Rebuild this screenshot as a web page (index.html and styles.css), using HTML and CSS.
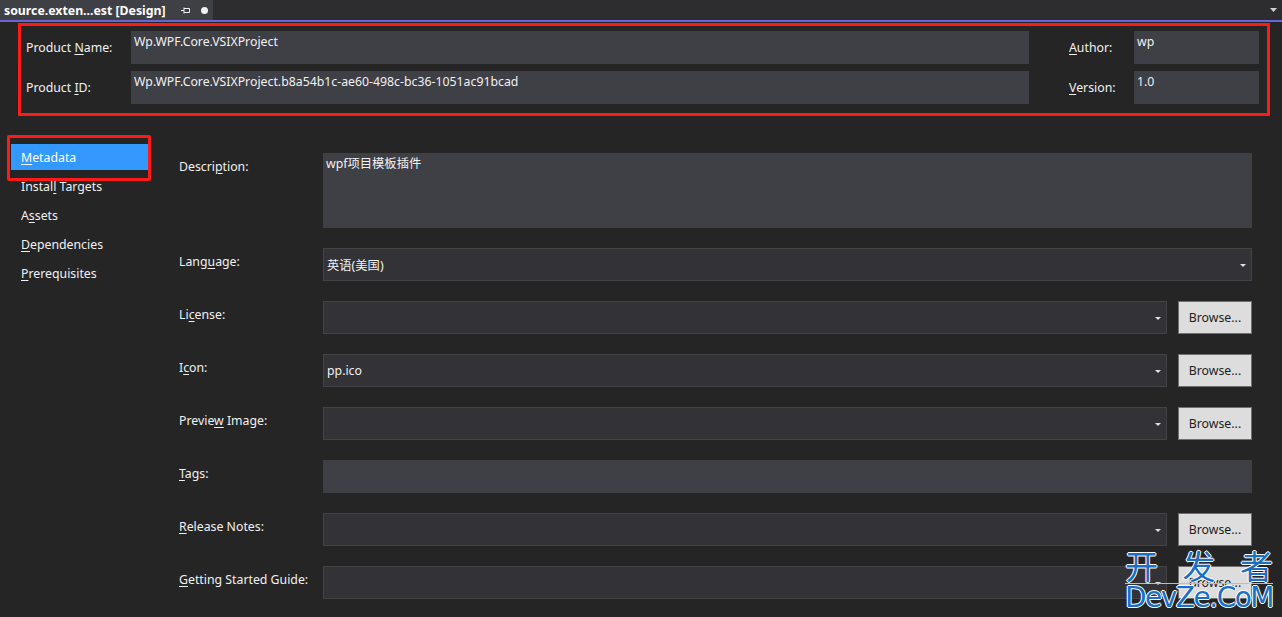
FILE: index.html
```html
<!DOCTYPE html>
<html lang="zh-CN">
<head>
  <meta charset="UTF-8" />
  <meta name="viewport" content="width=device-width, initial-scale=1.0"/>
  <title>source.extension.vsixmanifest [Design]</title>
  <link rel="stylesheet" href="styles.css">
</head>
<body>
  <div class="tabbar">
    <div class="tab">
      <span class="tab-title">source.exten...est [Design]</span>
      <svg class="pin" width="9" height="7" viewBox="0 0 9 7">
        <path d="M0 3.5H3M3 0.5V6.5M3 1.5H8.5V5.5H3" fill="none" stroke="#f1f1f1" stroke-width="1"/>
      </svg>
      <span class="dot"></span>
    </div>
    <svg class="tab-menu" width="7" height="4" viewBox="0 0 7 4"><path d="M0 0H7L3.5 4Z" fill="#d0d0d0"/></svg>
  </div>
  <div class="accent"></div>

  <div class="header">
    <label class="hdr-label">Product <u>N</u>ame:</label>
    <div class="textbox">Wp.WPF.Core.VSIXProject</div>
    <label class="hdr-label side"><u>A</u>uthor:</label>
    <div class="textbox">wp</div>

    <label class="hdr-label">Product <u>I</u>D:</label>
    <div class="textbox">Wp.WPF.Core.VSIXProject.b8a54b1c-ae60-498c-bc36-1051ac91bcad</div>
    <label class="hdr-label side"><u>V</u>ersion:</label>
    <div class="textbox">1.0</div>
  </div>

  <div class="main">
    <div class="nav">
      <div class="nav-item active"><u>M</u>etadata</div>
      <div class="nav-item">Instal<u>l</u> Targets</div>
      <div class="nav-item">A<u>s</u>sets</div>
      <div class="nav-item"><u>D</u>ependencies</div>
      <div class="nav-item"><u>P</u>rerequisites</div>
      <div class="mark-box"></div>
    </div>

    <div class="form">
      <label class="field-label">Descri<u>p</u>tion:</label>
      <div class="textbox tall">wpf项目模板插件</div>

      <label class="field-label">Lang<u>u</u>age:</label>
      <div class="combo"><span>英语(美国)</span><i class="arrow"></i></div>

      <label class="field-label">Li<u>c</u>ense:</label>
      <div class="with-btn">
        <div class="combo"><span></span><i class="arrow"></i></div>
        <button class="browse">Browse...</button>
      </div>

      <label class="field-label">I<u>c</u>on:</label>
      <div class="with-btn">
        <div class="combo"><span>pp.ico</span><i class="arrow"></i></div>
        <button class="browse">Browse...</button>
      </div>

      <label class="field-label">Previe<u>w</u> Image:</label>
      <div class="with-btn">
        <div class="combo"><span></span><i class="arrow"></i></div>
        <button class="browse">Browse...</button>
      </div>

      <label class="field-label"><u>T</u>ags:</label>
      <div class="textbox"></div>

      <label class="field-label"><u>R</u>elease Notes:</label>
      <div class="with-btn">
        <div class="combo"><span></span><i class="arrow"></i></div>
        <button class="browse">Browse...</button>
      </div>

      <label class="field-label"><u>G</u>etting Started Guide:</label>
      <div class="with-btn">
        <div class="combo"><span></span><i class="arrow"></i></div>
        <button class="browse">Browse...</button>
      </div>
    </div>
  </div>

  <div class="watermark">
    <div class="wm-cn"><span>开</span><span>发</span><span>者</span></div>
    <div class="wm-en">DevZe.CoM</div>
  </div>
</body>
</html>
```

FILE: styles.css
```css
body {
  margin: 0;
  background-color: #252526;
  color: #f1f1f1;
  font-family: 'Noto Sans', 'Noto Sans CJK SC', sans-serif;
  font-size: 12.3px;
  position: relative;
  height: 617px;
  overflow: hidden;
}

u {
  text-underline-offset: 2px;
}

/* tab strip */
.tabbar {
  height: 20px;
  background-color: #2d2d30;
  display: flex;
  align-items: center;
  justify-content: space-between;
}

.tab {
  height: 20px;
  width: 213px;
  background-color: #3f3f46;
  display: flex;
  align-items: center;
  padding-left: 4px;
  box-sizing: border-box;
}

.tab-title {
  font-weight: bold;
  color: #ffffff;
  white-space: nowrap;
}

.pin {
  margin-left: 15px;
}

.dot {
  width: 7px;
  height: 7px;
  border-radius: 50%;
  background-color: #f1f1f1;
  margin-left: 11px;
}

.tab-menu {
  margin-right: 5px;
}

.accent {
  height: 2px;
  background-color: #6c63d6;
  margin-bottom: 1px;
}

/* header block */
.header {
  margin: 0 12px 0 18px;
  border: 3px solid #ff1a1a;
  padding: 5px 8px 9px 5px;
  display: grid;
  grid-template-columns: 105px 1fr 105px 125px;
  grid-auto-rows: 33px;
  row-gap: 7px;
}

.hdr-label {
  line-height: 33px;
  white-space: nowrap;
}

.hdr-label.side {
  padding-left: 40px;
}

.textbox {
  background-color: #3f3f46;
  padding: 3px 3px;
  line-height: 16px;
  height: 33px;
  box-sizing: border-box;
  white-space: nowrap;
}

.textbox.tall {
  height: 75px;
}

/* body */
.main {
  display: flex;
}

.nav {
  width: 168px;
  padding: 28px 0 0 11px;
  position: relative;
}

.nav-item {
  width: 137px;
  height: 26px;
  line-height: 28px;
  padding-left: 10px;
  box-sizing: border-box;
  margin-bottom: 3px;
  white-space: nowrap;
}

.nav-item.active {
  background-color: #3399ff;
  color: #ffffff;
}

.mark-box {
  position: absolute;
  left: 7px;
  top: 19px;
  width: 138px;
  height: 40px;
  border: 3px solid #ff1a1a;
  border-radius: 2px;
}

.form {
  flex: 1;
  padding: 37px 30px 0 0;
  display: grid;
  grid-template-columns: 144px 1fr;
  row-gap: 20px;
  align-items: start;
}

.field-label {
  line-height: 28px;
  white-space: nowrap;
}

.combo {
  height: 33px;
  box-sizing: border-box;
  background-color: #333337;
  border: 1px solid #434346;
  display: flex;
  align-items: center;
  justify-content: space-between;
  padding: 0 5px 0 3px;
}

.arrow {
  width: 0;
  height: 0;
  border-left: 3px solid transparent;
  border-right: 3px solid transparent;
  border-top: 3px solid #e0e0e0;
  margin-top: 2px;
}

.with-btn {
  display: flex;
}

.with-btn .combo {
  flex: 1;
}

.browse {
  width: 74px;
  height: 33px;
  margin-left: 11px;
  background-color: #dddddd;
  border: 1px solid #707070;
  color: #1e1e1e;
  font-family: 'Noto Sans', sans-serif;
  font-size: 12.3px;
  padding: 0;
}

/* watermark */
.watermark {
  position: absolute;
  left: 1125px;
  top: 549px;
  width: 148px;
  color: #1b6fc4;
  text-shadow: 1px 0 #fff, -1px 0 #fff, 0 1px #fff, 0 -1px #fff;
  line-height: 1;
}

.wm-cn {
  display: flex;
  justify-content: space-between;
  font-family: 'Noto Sans CJK SC', sans-serif;
  font-size: 33px;
  border-bottom: 1px solid #8ecaf0;
  padding-bottom: 1px;
}

.wm-en {
  font-family: 'DejaVu Sans', sans-serif;
  font-size: 28px;
  letter-spacing: -1.5px;
  white-space: nowrap;
}
```
